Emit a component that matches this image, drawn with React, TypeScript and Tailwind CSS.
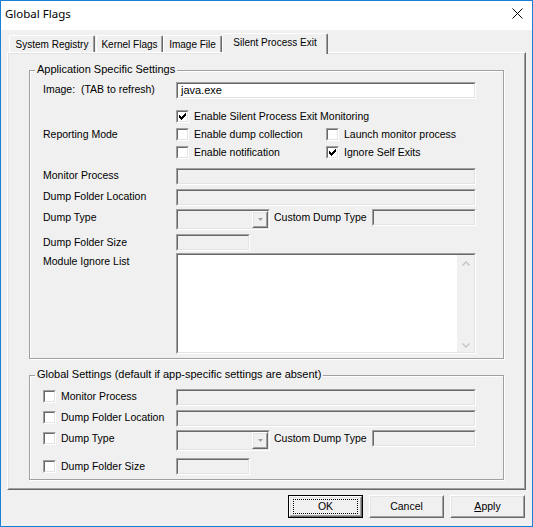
import type { ReactNode } from 'react'

// classic win32 3d edges
function Sunken({ className = '', fill = 'bg-[#f0f0f0]', children }: { className?: string; fill?: string; children?: ReactNode }) {
  return (
    <div className={`shrink-0 border border-t-[#a0a0a0] border-l-[#a0a0a0] border-r-white border-b-white ${className}`}>
      <div className={`flex h-full border border-t-[#696969] border-l-[#696969] border-r-[#e3e3e3] border-b-[#e3e3e3] ${fill}`}>
        {children}
      </div>
    </div>
  )
}

function Raised({ className = '', children }: { className?: string; children?: ReactNode }) {
  return (
    <div className={`shrink-0 border border-t-white border-l-white border-r-[#696969] border-b-[#696969] ${className}`}>
      <div className="flex h-full items-center justify-center border border-t-[#e3e3e3] border-l-[#e3e3e3] border-r-[#a0a0a0] border-b-[#a0a0a0] bg-[#f0f0f0]">
        {children}
      </div>
    </div>
  )
}

const CHECK_TOP = [3, 4, 5, 4, 3, 2, 1]

function Check({ checked = false }: { checked?: boolean }) {
  return (
    <Sunken className="h-[13px] w-[13px]" fill="bg-white">
      {checked && (
        <svg width="9" height="9" viewBox="0 0 9 9" className="block" shapeRendering="crispEdges">
          {CHECK_TOP.map((t, i) => (
            <rect key={i} x={i + 1} y={t} width="1" height="3" fill="#000" />
          ))}
        </svg>
      )}
    </Sunken>
  )
}

function CheckItem({ label, checked, className = '' }: { label: string; checked?: boolean; className?: string }) {
  return (
    <div className={`flex items-start gap-[5px] ${className}`}>
      <Check checked={checked} />
      <span className="whitespace-nowrap text-[10.5px] leading-[13px]">{label}</span>
    </div>
  )
}

function Field({ w = 'w-[300px]' }: { w?: string }) {
  return <Sunken className={`h-[17px] ${w}`} />
}

function Combo() {
  return (
    <Sunken className="h-[21px] w-[94px]">
      <div className="flex-1" />
      <Raised className="h-full w-[16px]">
        <svg width="5" height="3" viewBox="0 0 5 3" className="block">
          <path d="M0 0h5L2.5 3z" fill="#a0a0a0" />
        </svg>
      </Raised>
    </Sunken>
  )
}

function DumpTypeRow() {
  return (
    <div className="flex w-[300px] items-start">
      <Combo />
      <span className="ml-[4px] mt-[1px] whitespace-nowrap text-[10.5px] leading-[14px]">Custom Dump Type</span>
      <div className="ml-auto">
        <Field w="w-[104px]" />
      </div>
    </div>
  )
}

function Group({ title, className = '', children }: { title: string; className?: string; children?: ReactNode }) {
  return (
    <div className={`relative shrink-0 border border-[#a0a0a0] shadow-[inset_1px_1px_0_#fff,1px_1px_0_#fff] ${className}`}>
      <span className="absolute left-[5px] top-[-8px] whitespace-nowrap bg-[#f0f0f0] px-[2px] text-[11px] leading-[13px]">
        {title}
      </span>
      {children}
    </div>
  )
}

function Label({ children, className = '' }: { children: ReactNode; className?: string }) {
  return <span className={`w-[133px] shrink-0 whitespace-pre text-[10.5px] leading-[14px] ${className}`}>{children}</span>
}

function Tab({ w, active, children }: { w: string; active?: boolean; children: ReactNode }) {
  return (
    <div
      className={`${w} flex shrink-0 items-center justify-center rounded-t-[2px] border-l border-t border-r border-l-white border-t-white border-r-[#696969] shadow-[inset_-1px_0_0_#a0a0a0] bg-[#f0f0f0] text-[10px] leading-[12px] whitespace-nowrap ${
        active ? 'relative z-10 -mb-[2px] h-[21px] pb-[3px]' : 'h-[17px] pt-[1px]'
      }`}
    >
      {children}
    </div>
  )
}

function Chevron({ up }: { up?: boolean }) {
  return (
    <svg width="8" height="5" viewBox="0 0 8 5" className="block">
      <path d={up ? 'M0.5 4.5L4 1l3.5 3.5' : 'M0.5 0.5L4 4l3.5-3.5'} fill="none" stroke="#c4c4c4" strokeWidth="1.4" />
    </svg>
  )
}

export default function App() {
  return (
    <div className="flex h-[527px] w-[533px] flex-col border border-[#1a7fd6] bg-[#f0f0f0] font-['Liberation_Sans',Arial,sans-serif] text-black">
      {/* title bar */}
      <div className="flex h-[29px] shrink-0 items-center justify-between bg-white pb-[4px] pl-[4px] pr-[9px]">
        <span className="font-['Noto_Sans',sans-serif] text-[11.5px] leading-[16px]">Global Flags</span>
        <svg width="11" height="11" viewBox="0 0 11 11" className="block">
          <path d="M0.5 0.5L10.5 10.5M10.5 0.5L0.5 10.5" stroke="#000" strokeWidth="1" />
        </svg>
      </div>

      <div className="px-[6px] pt-[3px]">
        {/* tabs */}
        <div className="flex h-[19px] items-end pl-[2px]">
          <Tab w="w-[86px]">System Registry</Tab>
          <div className="ml-[1px]">
            <Tab w="w-[67px]">Kernel Flags</Tab>
          </div>
          <Tab w="w-[59px]">Image File</Tab>
          <Tab w="w-[106px]" active>Silent Process Exit</Tab>
        </div>

        {/* tab page */}
        <div className="h-[438px] border border-t-white border-l-white border-r-[#696969] border-b-[#696969]">
          <div className="flex h-full flex-col border border-t-[#e3e3e3] border-l-[#e3e3e3] border-r-[#a0a0a0] border-b-[#a0a0a0] px-[20px] pt-[16px]">
            <Group title="Application Specific Settings" className="h-[289px] pl-[13px] pt-[11px]">
              <div className="flex h-[17px] items-start">
                <Label>Image:  (TAB to refresh)</Label>
                <Sunken className="h-[17px] w-[300px]" fill="bg-white">
                  <span className="pl-[3px] text-[11px] leading-[13px]">java.exe</span>
                </Sunken>
              </div>

              <div className="mt-[11px] flex">
                <div className="flex w-[133px] shrink-0 flex-col">
                  <div className="h-[18px]" />
                  <Label className="-mt-[1px]">Reporting Mode</Label>
                </div>
                <div className="flex flex-col">
                  <CheckItem className="h-[18px]" label="Enable Silent Process Exit Monitoring" checked />
                  <div className="flex h-[18px]">
                    <CheckItem className="w-[150px]" label="Enable dump collection" />
                    <CheckItem label="Launch monitor process" />
                  </div>
                  <div className="flex h-[18px]">
                    <CheckItem className="w-[150px]" label="Enable notification" />
                    <CheckItem label="Ignore Self Exits" checked />
                  </div>
                </div>
              </div>

              <div className="mt-[4px] flex items-start">
                <Label>Monitor Process</Label>
                <Field />
              </div>
              <div className="mt-[4px] flex items-start">
                <Label>Dump Folder Location</Label>
                <Field />
              </div>
              <div className="mt-[3px] flex items-start">
                <Label className="mt-[1px]">Dump Type</Label>
                <DumpTypeRow />
              </div>
              <div className="mt-[4px] flex items-start">
                <Label className="mt-[1px]">Dump Folder Size</Label>
                <Field w="w-[74px]" />
              </div>
              <div className="mt-[2px] flex items-start">
                <Label className="mt-[1px]">Module Ignore List</Label>
                <Sunken className="h-[101px] w-[300px]" fill="bg-white">
                  <div className="flex-1" />
                  <div className="flex w-[17px] flex-col items-center justify-between bg-[#f0f0f0] pb-[4px] pt-[6px]">
                    <Chevron up />
                    <Chevron />
                  </div>
                </Sunken>
              </div>
            </Group>

            <Group title="Global Settings (default if app-specific settings are absent)" className="mt-[16px] h-[105px] pl-[13px] pt-[13px]">
              <div className="flex items-start">
                <CheckItem className="mt-[1px] w-[133px] shrink-0" label="Monitor Process" />
                <Field />
              </div>
              <div className="mt-[4px] flex items-start">
                <CheckItem className="mt-[1px] w-[133px] shrink-0" label="Dump Folder Location" />
                <Field />
              </div>
              <div className="mt-[3px] flex items-start">
                <CheckItem className="mt-[2px] w-[133px] shrink-0" label="Dump Type" />
                <DumpTypeRow />
              </div>
              <div className="mt-[7px] flex items-start">
                <CheckItem className="mt-[2px] w-[133px] shrink-0" label="Dump Folder Size" />
                <Field w="w-[74px]" />
              </div>
            </Group>
          </div>
        </div>
      </div>

      {/* dialog buttons */}
      <div className="mt-[5px] flex justify-end gap-[6px] pr-[7px] text-[10.5px]">
        <div className="h-[23px] w-[75px] border border-black">
          <Raised className="h-full w-full">
            <div className="flex h-[15px] w-[65px] items-center justify-center border border-dotted border-black">OK</div>
          </Raised>
        </div>
        <Raised className="h-[23px] w-[75px]">Cancel</Raised>
        <Raised className="h-[23px] w-[75px]">
          <span>
            <span className="underline underline-offset-[1px]">A</span>pply
          </span>
        </Raised>
      </div>
    </div>
  )
}
